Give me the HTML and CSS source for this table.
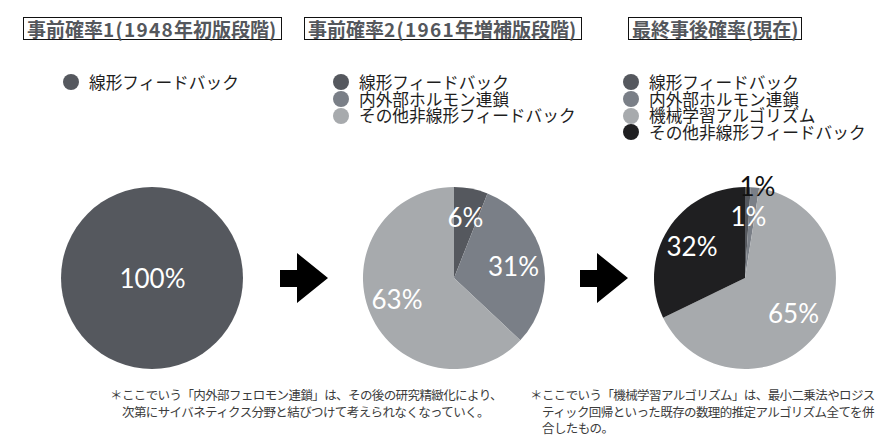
FILE: index.html
```html
<!DOCTYPE html>
<html lang="ja">
<head>
<meta charset="utf-8">
<title>事前確率と事後確率</title>
<link rel="stylesheet" href="styles.css">
</head>
<body>
<div class="page">
  <div class="title-row">
    <div class="col col-1"><span class="title">事前確率<span class="num">1(1948</span>年初版段階<span class="num">)</span></span></div>
    <div class="col col-2"><span class="title">事前確率<span class="num">2(1961</span>年増補版段階<span class="num">)</span></span></div>
    <div class="col col-3"><span class="title">最終事後確率(現在)</span></div>
  </div>

  <div class="legend-row">
    <ul class="legend legend-1">
      <li><span class="dot c-dark"></span>線形フィードバック</li>
    </ul>
    <ul class="legend legend-2">
      <li><span class="dot c-dark"></span>線形フィードバック</li>
      <li><span class="dot c-mid"></span>内外部ホルモン連鎖</li>
      <li><span class="dot c-light"></span>その他非線形フィードバック</li>
    </ul>
    <ul class="legend legend-3">
      <li><span class="dot c-dark"></span>線形フィードバック</li>
      <li><span class="dot c-mid"></span>内外部ホルモン連鎖</li>
      <li><span class="dot c-light"></span>機械学習アルゴリズム</li>
      <li><span class="dot c-black"></span>その他非線形フィードバック</li>
    </ul>
  </div>

  <div class="chart-row">
    <svg class="pie pie-1" viewBox="0 0 182 182">
      <circle cx="91" cy="91" r="91" class="f-dark"/>
      <text x="91.5" y="101" class="pl pl-w">100%</text>
    </svg>
    <svg class="arrow arrow-1" viewBox="0 0 48 50">
      <polygon points="0,17 17,17 17,0 48,25 17,50 17,34 0,34"/>
    </svg>
    <svg class="pie pie-2" viewBox="0 0 182 182">
      <path class="f-dark" d="M91,91 L91,0 A91,91 0 0 1 124.5,6.4 Z"/>
      <path class="f-mid" d="M91,91 L124.5,6.4 A91,91 0 0 1 157.3,153.3 Z"/>
      <path class="f-light" d="M91,91 L157.3,153.3 A91,91 0 1 1 91,0 Z"/>
      <text x="102.5" y="40" class="pl pl-w">6%</text>
      <text x="150.5" y="89" class="pl pl-w">31%</text>
      <text x="34" y="122" class="pl pl-w">63%</text>
    </svg>
    <svg class="arrow arrow-2" viewBox="0 0 48 50">
      <polygon points="0,17 17,17 17,0 48,25 17,50 17,34 0,34"/>
    </svg>
    <svg class="pie pie-3" viewBox="0 0 182 182">
      <path class="f-dark" d="M91,91 L91,0 A91,91 0 0 1 96.7,0.2 Z"/>
      <path class="f-mid" d="M91,91 L96.7,0.2 A91,91 0 0 1 105.2,1.1 Z"/>
      <path class="f-light" d="M91,91 L105.2,1.1 A91,91 0 1 1 9.1,130.7 Z"/>
      <path class="f-black" d="M91,91 L9.1,130.7 A91,91 0 0 1 91,0 Z"/>
      <text x="103.5" y="9" class="pl pl-b">1%</text>
      <text x="94.5" y="39" class="pl pl-w">1%</text>
      <text x="38" y="69" class="pl pl-w">32%</text>
      <text x="139.5" y="136" class="pl pl-w">65%</text>
    </svg>
  </div>

  <div class="note-row">
    <p class="note note-1">＊ここでいう「内外部フェロモン連鎖」は、その後の研究精緻化により、<br>次第にサイバネティクス分野と結びつけて考えられなくなっていく。</p>
    <p class="note note-2">＊ここでいう「機械学習アルゴリズム」は、最小二乗法やロジス<br>ティック回帰といった既存の数理的推定アルゴリズム全てを併<br>合したもの。</p>
  </div>
</div>
</body>
</html>
```

FILE: styles.css
```css
html, body {
  margin: 0;
  padding: 0;
  background: #ffffff;
}

body {
  font-family: "Noto Sans CJK JP", "Noto Sans", sans-serif;
  color: #222222;
  width: 895px;
  height: 447px;
  overflow: hidden;
}

.page {
  padding-top: 17px;
}

/* titles */
.title-row {
  display: flex;
  padding-left: 23px;
  height: 24px;
}

.col-1 { width: 281px; }
.col-2 { width: 324px; }
.col-3 { flex: 1; }

.title {
  display: inline-block;
  border: 1.5px solid #111111;
  padding: 0 3px;
  font-size: 19px;
  font-weight: 700;
  line-height: 21px;
  color: #54575c;
  white-space: nowrap;
}

.title .num {
  letter-spacing: 1.3px;
}

/* legends */
.legend-row {
  display: flex;
  margin-top: 33px;
  height: 113px;
}

.legend {
  list-style: none;
  margin: 0;
  padding: 0;
  font-size: 16.7px;
  line-height: 16.7px;
  color: #1e1e1e;
  white-space: nowrap;
}

.legend li {
  display: flex;
  align-items: center;
}

.legend-1 { margin-left: 63px; width: 270px; }
.legend-2 { width: 290px; }
.legend-3 { flex: 1; }

.dot {
  width: 16px;
  height: 16px;
  border-radius: 50%;
  margin-right: 10px;
  flex: none;
}

.c-dark { background: #55585e; }
.c-mid { background: #7a7f87; }
.c-light { background: #a7aaad; }
.c-black { background: #1f1f21; }

/* charts */
.chart-row {
  display: flex;
  align-items: center;
  padding-left: 61px;
  height: 182px;
}

.pie {
  width: 182px;
  height: 182px;
  overflow: visible;
  flex: none;
}

.arrow {
  width: 48px;
  height: 50px;
  flex: none;
}

.arrow polygon { fill: #000000; }

.arrow-1 { margin-left: 37px; margin-right: 35px; }
.arrow-2 { margin-left: 35px; margin-right: 26px; }

.f-dark { fill: #55585e; }
.f-mid { fill: #7a7f87; }
.f-light { fill: #a7aaad; }
.f-black { fill: #1f1f21; }

.pl {
  font-family: "Lato", "Noto Sans", sans-serif;
  font-size: 26px;
  text-anchor: middle;
}

.pl-w { fill: #ffffff; }
.pl-b { fill: #111111; }

/* notes */
.note-row {
  display: flex;
  margin-top: 18px;
}

.note {
  margin: 0;
  font-size: 12.5px;
  letter-spacing: -0.6px;
  line-height: 16.5px;
  color: #3c3c3c;
  white-space: nowrap;
  padding-left: 12px;
  text-indent: -12px;
}

.note-1 { margin-left: 110px; width: 408px; }
.note-2 { margin-left: 0; }
```
